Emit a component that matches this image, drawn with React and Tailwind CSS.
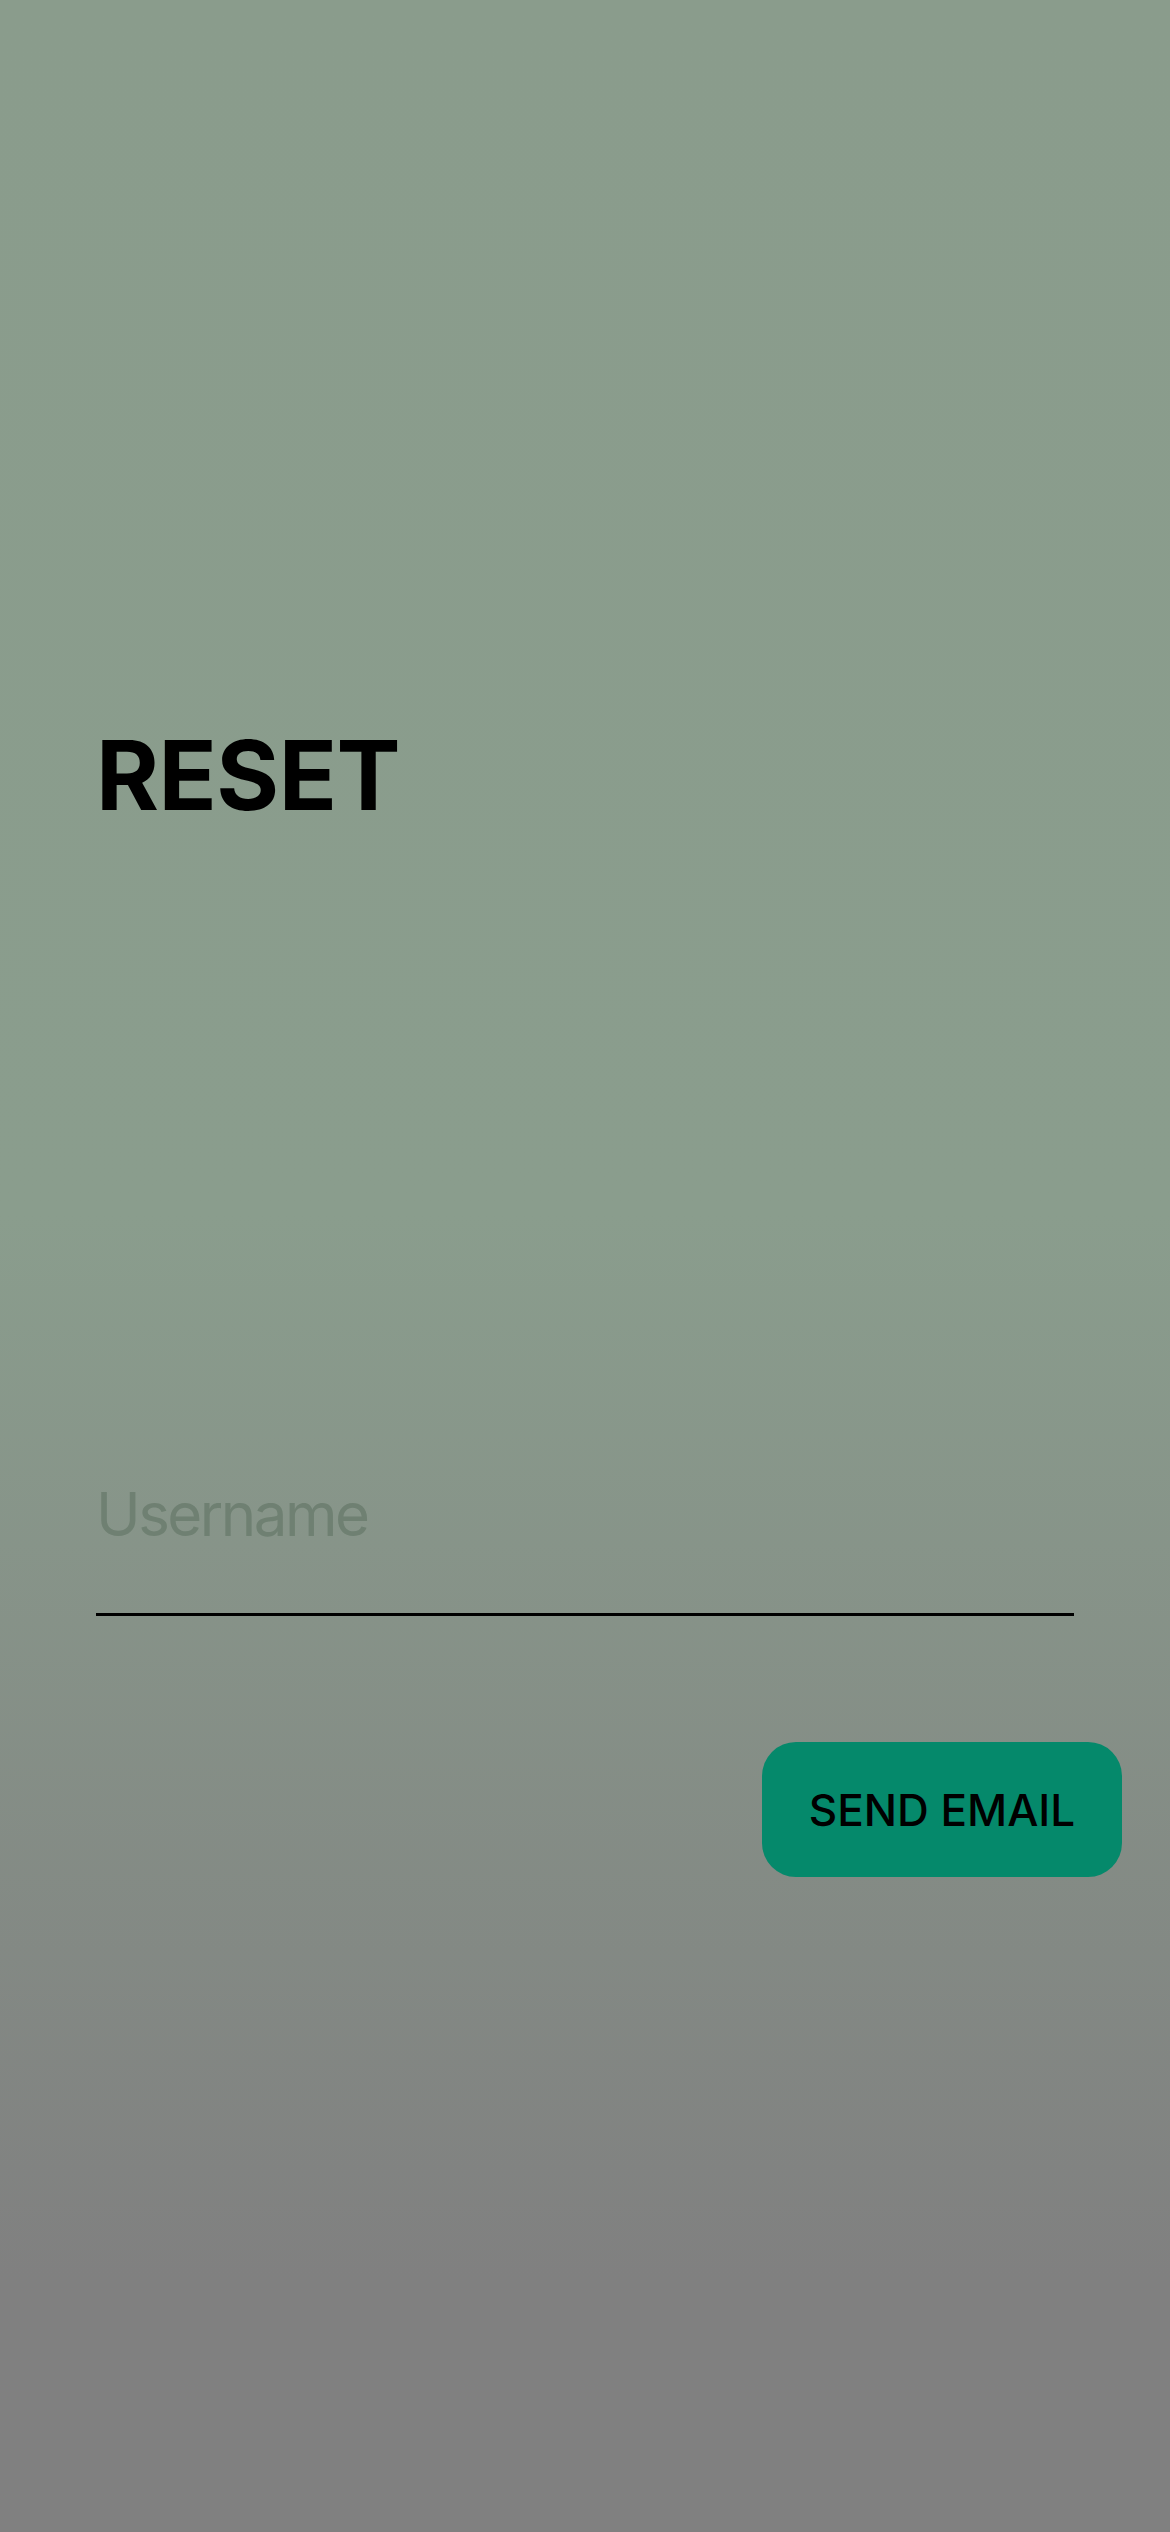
export default function App() {
  return (
    <div
      className="w-[1170px] h-[2532px] overflow-hidden flex flex-col bg-[linear-gradient(to_bottom,#8a9c8c_0%,#8a9d8d_48%,#808080_90%,#808080_100%)]"
      style={{ fontFamily: 'Inter, "Noto Sans", sans-serif' }}
    >
      <div className="pt-[727px] px-[96px]">
        <h1 className="text-[96px] leading-none font-bold text-black tracking-[-0.5px]">RESET</h1>
      </div>
      <div className="mt-[661px] px-[96px]">
        <div className="text-[60px] leading-none text-[#6f8072] font-normal tracking-[-2.5px]">Username</div>
        <div className="mt-[69px] h-[3px] bg-black" />
      </div>
      <div className="mt-[126px] flex justify-end pr-[48px]">
        <button className="w-[360px] h-[135px] rounded-[34px] bg-[#05896b] flex items-center justify-center text-[44px] leading-none font-medium text-black">
          SEND EMAIL
        </button>
      </div>
    </div>
  );
}
